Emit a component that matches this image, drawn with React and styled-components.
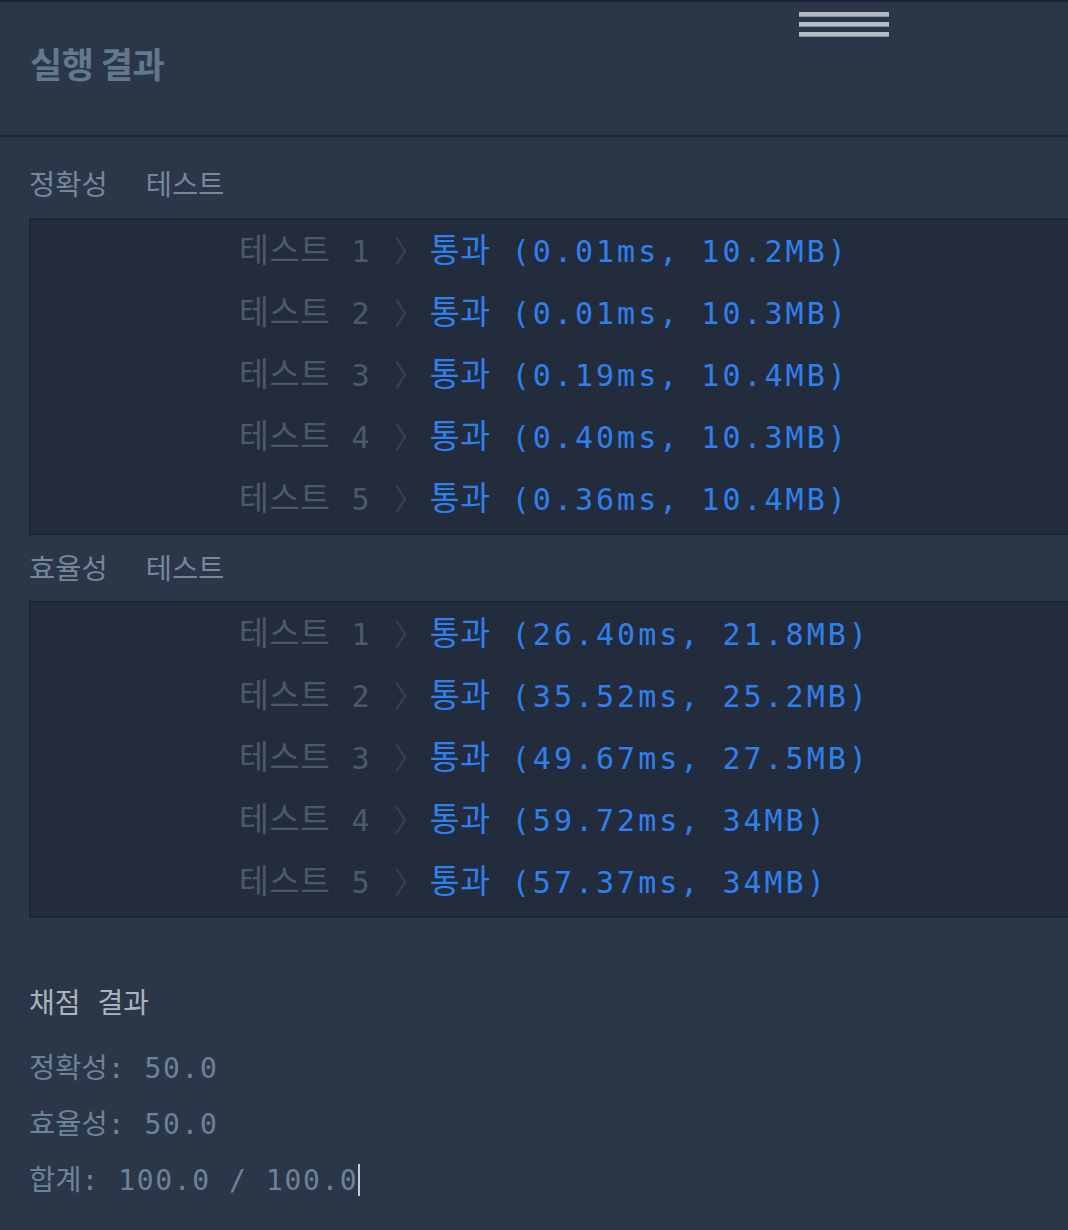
import React from 'react';
import styled, { createGlobalStyle } from 'styled-components';

const GlobalStyle = createGlobalStyle`
  html, body {
    margin: 0;
    padding: 0;
    background: #2b3648;
  }
  body {
    font-family: "DejaVu Sans Mono", "Noto Sans CJK KR", monospace;
    overflow: hidden;
  }
`;

const Page = styled.div`
  position: relative;
  min-height: 1230px;
  background: #2b3648;
  border-top: 2px solid #1d2333;
  overflow: hidden;
`;

const Header = styled.header`
  height: 135px;
  box-sizing: border-box;
  padding: 40px 30px 0;
  border-bottom: 2px solid #1d2333;
`;

const Title = styled.h2`
  margin: 0;
  font-family: "Noto Sans CJK KR", "Noto Sans", sans-serif;
  font-size: 35px;
  font-weight: 700;
  line-height: 42px;
  letter-spacing: -0.5px;
  color: #62788d;
`;

const Handle = styled.svg`
  position: absolute;
  top: 8px;
  left: 799px;
`;

const Content = styled.main`
  padding: 25px 0 0 29px;
`;

const SectionLabel = styled.div`
  display: flex;
  gap: 38px;
  height: 40px;
  align-items: center;
  font-family: "Noto Sans CJK KR", "Noto Sans", sans-serif;
  font-size: 28.5px;
  color: #74889a;
  margin-top: ${p => p.$top || 0}px;
`;

const ResultBox = styled.div`
  margin: ${p => p.$top}px -20px 0 0;
  background: #232c3d;
  border: 2px solid #1e2536;
  padding-bottom: 3px;
`;

const Row = styled.div`
  height: 62px;
  line-height: 56px;
  padding-left: 208px;
  white-space: pre;
  font-size: 30px;
  letter-spacing: 3px;
  color: #4d596b;
`;

const Ko = styled.span`
  font-family: "Noto Sans CJK KR", sans-serif;
  font-size: ${p => p.$size || 32.5}px;
  letter-spacing: ${p => p.$ls ?? 0.6}px;
`;

const Chevron = styled.span`
  display: inline-block;
  width: 36px;
  font-family: "Noto Sans CJK KR", sans-serif;
  letter-spacing: 0;
  color: #364152;
`;

const Pass = styled.span`
  color: #2f80ed;
`;

const ScoreTitle = styled.div`
  margin-top: 63px;
  height: 40px;
  line-height: 40px;
  display: flex;
  gap: 17px;
  font-family: "Noto Sans CJK KR", "Noto Sans", sans-serif;
  font-size: 28px;
  color: #a9b4bd;
`;

const ScoreList = styled.div`
  margin-top: 17px;
`;

const ScoreLine = styled.div`
  height: 56px;
  line-height: 56px;
  white-space: pre;
  font-size: 28px;
  letter-spacing: 1.6px;
  color: #6d8496;
`;

const Caret = styled.span`
  display: inline-block;
  width: 1.5px;
  height: 32px;
  background: #c4ccd3;
  vertical-align: middle;
  margin-top: -4px;
`;

const accuracy = [
  ['1', '0.01ms, 10.2MB'],
  ['2', '0.01ms, 10.3MB'],
  ['3', '0.19ms, 10.4MB'],
  ['4', '0.40ms, 10.3MB'],
  ['5', '0.36ms, 10.4MB'],
];

const efficiency = [
  ['1', '26.40ms, 21.8MB'],
  ['2', '35.52ms, 25.2MB'],
  ['3', '49.67ms, 27.5MB'],
  ['4', '59.72ms, 34MB'],
  ['5', '57.37ms, 34MB'],
];

function TestRows({ items }) {
  return items.map(([n, info]) => (
    <Row key={n}>
      <Ko>테스트</Ko> {n} <Chevron>〉</Chevron>
      <Pass><Ko>통과</Ko> ({info})</Pass>
    </Row>
  ));
}

export default function App() {
  return (
    <Page>
      <GlobalStyle />
      <Header>
        <Title>실행 결과</Title>
      </Header>
      <Handle width="90" height="28" viewBox="0 0 90 28">
        <rect x="0" y="2" width="90" height="5" fill="#b3bcc3" />
        <rect x="0" y="6" width="90" height="1" fill="#8a939b" />
        <rect x="0" y="12" width="90" height="5" fill="#b3bcc3" />
        <rect x="0" y="16" width="90" height="1" fill="#8a939b" />
        <rect x="0" y="22" width="90" height="5" fill="#b3bcc3" />
        <rect x="0" y="26" width="90" height="1" fill="#8a939b" />
      </Handle>
      <Content>
        <SectionLabel><span>정확성</span><span>테스트</span></SectionLabel>
        <ResultBox $top={16}>
          <TestRows items={accuracy} />
        </ResultBox>
        <SectionLabel $top={11}><span>효율성</span><span>테스트</span></SectionLabel>
        <ResultBox $top={15}>
          <TestRows items={efficiency} />
        </ResultBox>
        <ScoreTitle><span>채점</span><span>결과</span></ScoreTitle>
        <ScoreList>
          <ScoreLine><Ko $size={28.5} $ls={0}>정확성</Ko>: 50.0</ScoreLine>
          <ScoreLine><Ko $size={28.5} $ls={0}>효율성</Ko>: 50.0</ScoreLine>
          <ScoreLine><Ko $size={28.5} $ls={0}>합계</Ko>: 100.0 / 100.0<Caret /></ScoreLine>
        </ScoreList>
      </Content>
    </Page>
  );
}
